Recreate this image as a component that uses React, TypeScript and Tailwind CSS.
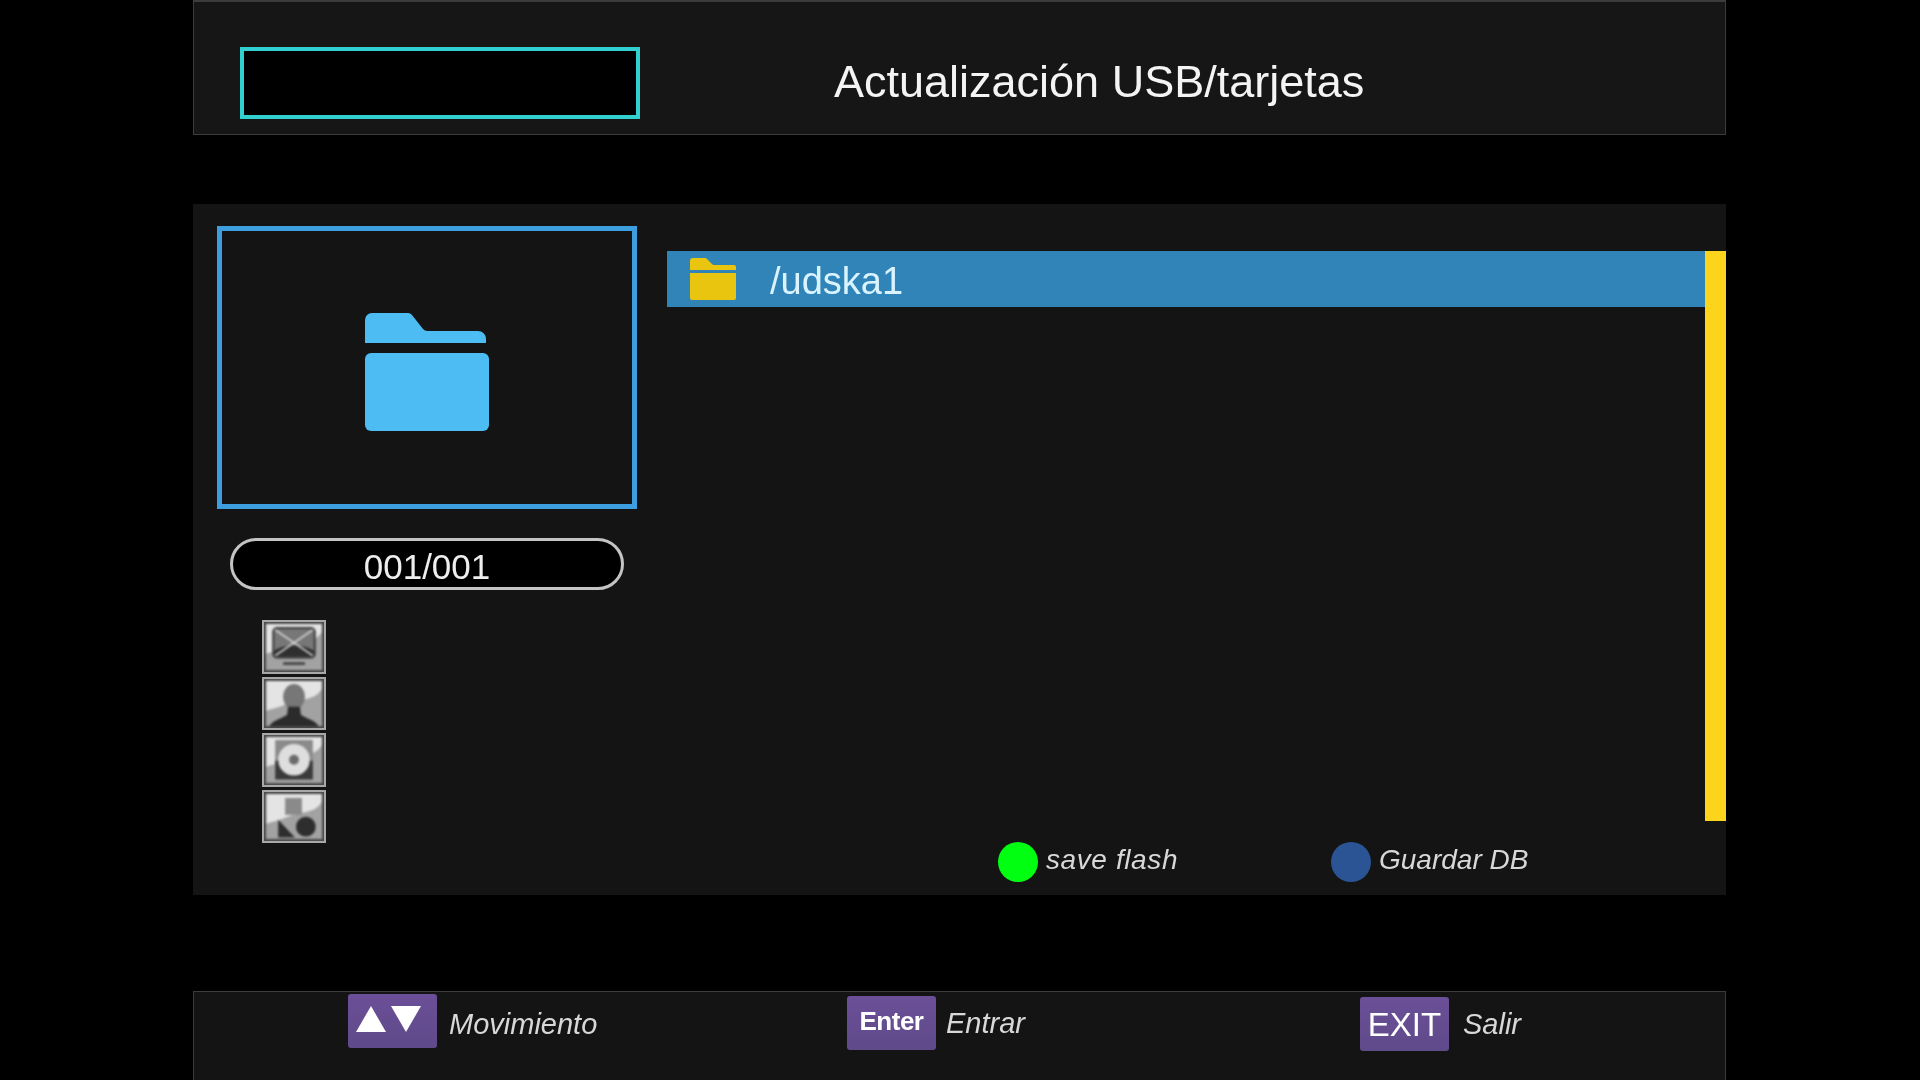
const sans = "font-['Liberation_Sans',Arial,sans-serif]";

const BlueFolder = () => (
  <svg width="124" height="118" viewBox="0 0 124 118">
    <path d="M0 7a7 7 0 0 1 7-7h35a6 6 0 0 1 5 2l11 14a6 6 0 0 0 5 2h50a8 8 0 0 1 8 8v4H0z" fill="#4dbcf2" />
    <path d="M0 46a6 6 0 0 1 6-6h112a6 6 0 0 1 6 6v66a6 6 0 0 1-6 6H6a6 6 0 0 1-6-6z" fill="#4dbcf2" />
  </svg>
);

const YellowFolder = () => (
  <svg width="48" height="42" viewBox="0 0 48 42">
    <path d="M1 3a3 3 0 0 1 3-3h12a3 3 0 0 1 2 1l5 5a3 3 0 0 0 2 1h20a2 2 0 0 1 2 2v3H1z" fill="#e9c50f" />
    <path d="M1 15h46v25a2 2 0 0 1-2 2H3a2 2 0 0 1-2-2z" fill="#e9c50f" />
  </svg>
);

const Tile = ({ children }: { children: React.ReactNode }) => (
  <div className="w-16 h-[53.5px] border-2 border-[#a8a8a8] bg-[#4a4a4a] p-[2px]">
    <svg viewBox="0 0 56 46" className="w-full h-full block bg-[#a2a2a2] blur-[1px]">
      <path d="M0 0h56v8c-6 12-24 10-34 15C12 27 6 28 0 30z" fill="#e4e4e4" />
      {children}
    </svg>
  </div>
);

const StatusIcons = () => (
  <div className="flex flex-col gap-[3px] w-16 ml-[45px] mt-[30px]">
    <Tile>
      <rect x="7" y="4" width="42" height="30" rx="4" fill="#777" stroke="#3a3a3a" strokeWidth="2" />
      <path d="M8 27c10-7 30-7 40 0v6H8z" fill="#2f2f2f" />
      <path d="M9 6l38 26M47 6L9 32" stroke="#dcdcdc" strokeWidth="1.5" />
      <path d="M17 40h22" stroke="#3a3a3a" strokeWidth="2.5" />
    </Tile>
    <Tile>
      <ellipse cx="28" cy="16" rx="11" ry="13" fill="#777" />
      <path d="M3 46c2-6 13-8 18-12l1-8h12l1 8c5 4 16 6 18 12z" fill="#2b2b2b" />
    </Tile>
    <Tile>
      <rect x="9" y="3" width="38" height="40" fill="#8a8a8a" />
      <path d="M9 24h38v19H9z" fill="#3a3a3a" />
      <circle cx="28" cy="23" r="16" fill="#dedede" />
      <circle cx="28" cy="23" r="5" fill="#6b6b6b" />
    </Tile>
    <Tile>
      <rect x="19" y="4" width="17" height="17" fill="#8a8a8a" />
      <path d="M12 26l17 18H12z" fill="#2e2e2e" />
      <circle cx="40" cy="33" r="10" fill="#2e2e2e" />
    </Tile>
  </div>
);

const KeyHint = ({
  keyLabel,
  text,
  className,
  textClass,
}: {
  keyLabel: React.ReactNode;
  text: string;
  className: string;
  textClass: string;
}) => (
  <div className={`flex items-start ${className}`}>
    <div className="h-[54px] w-[89px] rounded-[3px] bg-gradient-to-b from-[#6b4f97] to-[#5f4a8a] flex items-center justify-center text-white">
      {keyLabel}
    </div>
    <span className={`${textClass} text-[29px] leading-8 italic text-[#d8d8d8]`}>{text}</span>
  </div>
);

export default function App() {
  return (
    <div className={`${sans} w-full h-screen bg-black overflow-hidden blur-[0.5px]`}>
      <div className="w-[1533px] ml-[193px] h-full flex flex-col">
        <header className="h-[135px] shrink-0 bg-[#161616] border border-t-2 border-[#3c3c3c] flex items-start pl-[46px] pt-[45px]">
          <div className="w-[400px] h-[72px] bg-black border-4 border-[#31cfcf]" />
          <h1 className="ml-[194px] mt-[10px] text-[45px] leading-[50px] text-[#f4f4f4]">Actualización USB/tarjetas</h1>
        </header>

        <main className="h-[691px] mt-[69px] shrink-0 bg-[#141414] flex">
          <aside className="w-[474px] shrink-0 pl-[24px] pt-[22px]">
            <div className="w-[420px] h-[283px] border-[5px] border-[#3d9fe0] flex items-center justify-center">
              <div className="mt-[8px]">
                <BlueFolder />
              </div>
            </div>
            <div className="w-[394px] h-[52px] ml-[13px] mt-[29px] pt-[7px] rounded-full bg-black border-[3px] border-[#c4c4c4] flex items-center justify-center text-[35px] text-[#eeeeee]">
              001/001
            </div>
            <StatusIcons />
          </aside>

          <section className="flex-1 pt-[47px] flex flex-col">
            <div className="flex items-start h-[570px]">
              <div className="flex-1 h-[56px] bg-[#3184b8] flex items-center pl-[22px]">
                <YellowFolder />
                <span className="ml-[33px] mt-[4px] text-[38px] text-[#d9f3ff]">/udska1</span>
              </div>
              <div className="w-[21px] h-full bg-[#fdd41c]" />
            </div>
            <div className="flex mt-[21px] ml-[331px]">
              <div className="flex items-center gap-[8px] w-[333px]">
                <span className="w-10 h-10 rounded-full bg-[#00ff10]" />
                <span className="text-[28px] italic tracking-[0.6px] text-[#d8d8d8] -mt-1">save flash</span>
              </div>
              <div className="flex items-center gap-[8px]">
                <span className="w-10 h-10 rounded-full bg-[#2a5494]" />
                <span className="text-[28px] italic text-[#d8d8d8] -mt-1">Guardar DB</span>
              </div>
            </div>
          </section>
        </main>

        <footer className="mt-[96px] flex-1 bg-[#141414] border border-b-0 border-[#3c3c3c] flex items-start pt-[2px]">
          <KeyHint
            className="ml-[154px] w-[499px]"
            textClass="ml-[12px] mt-[14px]"
            text="Movimiento"
            keyLabel={
              <svg width="65" height="26" viewBox="0 0 65 26" className="-mt-1 -ml-2">
                <path d="M0 26L15 0l15 26z" fill="#fff" />
                <path d="M35 0h30L50 26z" fill="#fff" />
              </svg>
            }
          />
          <KeyHint
            className="mt-[2px] w-[513px]"
            textClass="ml-[10px] mt-[11px]"
            text="Entrar"
            keyLabel={<span className="text-[26px] font-bold -mt-[3px] tracking-[-0.5px]">Enter</span>}
          />
          <KeyHint
            className="mt-[3px]"
            textClass="ml-[14px] mt-[11px]"
            text="Salir"
            keyLabel={<span className="text-[33px] mt-[2px]">EXIT</span>}
          />
        </footer>
      </div>
    </div>
  );
}
